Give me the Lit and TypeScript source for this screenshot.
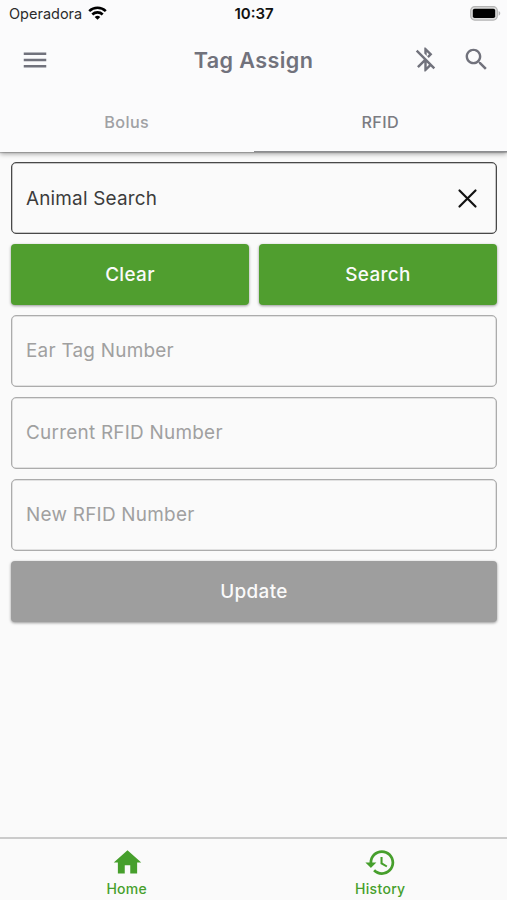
import { LitElement, html, css, svg } from "lit";
import { customElement } from "lit/decorators.js";

const icon = (name: string, d: string) =>
  html`<svg class="icon ${name}" viewBox="0 0 24 24" aria-hidden="true">${svg`<path d=${d}></path>`}</svg>`;

const paths = {
  menu: "M3 18h18v-2H3v2zm0-5h18v-2H3v2zm0-7v2h18V6H3z",
  bluetoothOff:
    "M13 5.83l1.88 1.88-1.6 1.6 1.41 1.41 3.02-3.02L12 2h-1v5.03l2 2v-3.2zM5.41 4L4 5.41 10.59 12 5 17.59 6.41 19 11 14.41V22h1l4.29-4.29 2.3 2.29L20 18.59 5.41 4zM13 18.17v-3.76l1.88 1.88L13 18.17z",
  search:
    "M15.5 14h-.79l-.28-.27C15.41 12.59 16 11.11 16 9.5 16 5.91 13.09 3 9.5 3S3 5.91 3 9.5 5.91 16 9.5 16c1.61 0 3.09-.59 4.23-1.57l.27.28v.79l5 4.99L20.49 19l-4.99-5zm-6 0C7.01 14 5 11.99 5 9.5S7.01 5 9.5 5 14 7.01 14 9.5 11.99 14 9.5 14z",
  home: "M10 20v-6h4v6h5v-8h3L12 3 2 12h3v8z",
  history:
    "M13 3c-4.97 0-9 4.03-9 9H1l3.89 3.89.07.14L9 12H6c0-3.87 3.13-7 7-7s7 3.13 7 7-3.13 7-7 7c-1.93 0-3.68-.79-4.94-2.06l-1.42 1.42C8.27 19.99 10.51 21 13 21c4.97 0 9-4.03 9-9s-4.03-9-9-9zm-1 5v5l4.28 2.54.72-1.21-3.5-2.08V8H12z",
};

@customElement("app-root")
export class AppRoot extends LitElement {
  static styles = css`
    :host {
      display: flex;
      flex-direction: column;
      width: 100%;
      height: 100vh;
      overflow: hidden;
      background: #fafafa;
      font-family: Inter, Roboto, sans-serif;
      color: #333;
    }
    * { box-sizing: border-box; }
    .icon { display: block; fill: currentColor; flex: none; }
    header {
      flex: none;
      height: 152px;
      background: #fbfbfc;
      box-shadow: 0 2px 5px rgba(0, 0, 0, 0.34), 0 1px 1px rgba(0, 0, 0, 0.2);
      color: #71727c;
    }
    .status {
      display: grid;
      grid-template-columns: 1fr auto 1fr;
      align-items: center;
      height: 27px;
      padding: 0 8px 0 9px;
      color: #111;
      font-size: 14.5px;
    }
    .carrier { display: flex; align-items: center; gap: 6px; color: #2b2b2b; }
    .wifi { width: 19px; height: 14px; margin-top: -2px; }
    .time { font-size: 15px; font-weight: 600; color: #111; }
    .battery { justify-self: end; width: 31px; height: 15px; margin-right: -2px; }
    .bar {
      display: grid;
      grid-template-columns: 1fr auto 1fr;
      align-items: center;
      height: 66px;
      padding: 0 16px;
    }
    .menu { width: 30px; height: 32px; margin-left: 4px; }
    h1 { margin: 0; font-size: 21.6px; line-height: 26px; font-weight: 600; letter-spacing: 0.38px; }
    .actions { display: flex; justify-self: end; gap: 22px; }
    .bluetooth, .search { width: 29px; height: 29px; margin-top: -1px; }
    .tabs { display: grid; grid-template-columns: 1fr 1fr; height: 59px; }
    .tab {
      display: flex;
      align-items: center;
      justify-content: center;
      padding-bottom: 1px;
      font-size: 16.2px;
      font-weight: 500;
      letter-spacing: 0.4px;
      color: #a0a1a4;
      border-bottom: 1px solid transparent;
    }
    .tab.active { color: #7b7c82; border-bottom-color: #8c8d90; }
    main {
      flex: 1;
      display: flex;
      flex-direction: column;
      gap: 10px;
      padding: 10px 10px 0 11px;
    }
    .field {
      display: flex;
      align-items: center;
      justify-content: space-between;
      height: 72px;
      padding: 0 17px 2px 14px;
      border: 1px solid #acacac;
      border-radius: 5px;
      box-shadow: inset 0 0 0 0.5px #c8c8c8;
      font-size: 18.9px;
      letter-spacing: 0.26px;
      color: #a0a0a0;
    }
    .field.filled {
      padding-bottom: 0;
      border-color: #484848;
      box-shadow: inset 0 0 0 0.5px #909090;
      color: #3c3c3c;
      letter-spacing: 0.2px;
    }
    .close { width: 23px; height: 23px; color: #111; }
    .row { display: grid; grid-template-columns: 1fr 1fr; gap: 10px; }
    .button {
      display: flex;
      align-items: center;
      justify-content: center;
      width: 100%;
      height: 61px;
      border: 0;
      border-radius: 4px;
      background: #509e2f;
      color: #fafafa;
      font: 500 18.9px Inter, Roboto, sans-serif;
      letter-spacing: 0.35px;
      box-shadow: 0 1px 3px rgba(0, 0, 0, 0.4);
    }
    .button.disabled { background: #9e9e9e; }
    nav {
      flex: none;
      display: grid;
      grid-template-columns: 1fr 1fr;
      height: 63px;
      border-top: 2px solid #cbcbcb;
      color: #469f2c;
    }
    .item {
      display: flex;
      flex-direction: column;
      align-items: center;
      padding-top: 7px;
      font-size: 14px;
      line-height: 19px;
      font-weight: 500;
      letter-spacing: 0.3px;
    }
    .home, .history { width: 33px; height: 33px; }
    .home { margin-left: 1px; }
  `;

  private field(label: string) {
    return html`<div class="field"><span>${label}</span></div>`;
  }

  render() {
    return html`
      <header>
        <div class="status">
          <div class="carrier">
            <span>Operadora</span>
            <svg class="icon wifi" viewBox="0 0 19 14">
              <g fill="none" stroke="#000" stroke-width="2.6">
                <path d="M1.2 5.1a12 12 0 0 1 16.6 0"></path>
                <path d="M4.3 8.5a7.5 7.5 0 0 1 10.4 0"></path>
              </g>
              <path fill="#000" d="M9.5 13.8 6.7 11a4 4 0 0 1 5.6 0z"></path>
            </svg>
          </div>
          <span class="time">10:37</span>
          <svg class="icon battery" viewBox="0 0 31 15">
            <rect x=".7" y=".7" width="26.6" height="13.4" rx="4" fill="#dcdcdc" stroke="#b4b4b4" stroke-width="1.2"></rect>
            <rect x="2.8" y="2.8" width="22.4" height="9.2" rx="1.8" fill="#000"></rect>
            <path d="M28.6 5.1c2.2.8 2.2 3.8 0 4.6z" fill="#b4b4b4"></path>
          </svg>
        </div>
        <div class="bar">
          ${icon("menu", paths.menu)}
          <h1>Tag Assign</h1>
          <div class="actions">
            ${icon("bluetooth", paths.bluetoothOff)} ${icon("search", paths.search)}
          </div>
        </div>
        <div class="tabs">
          <div class="tab"><span>Bolus</span></div>
          <div class="tab active"><span>RFID</span></div>
        </div>
      </header>
      <main>
        <div class="field filled">
          <span>Animal Search</span>
          <svg class="icon close" viewBox="0 0 23 23">
            <path d="M3.5 3.5l16 16M19.5 3.5l-16 16" stroke="currentColor" stroke-width="2.2" stroke-linecap="round"></path>
          </svg>
        </div>
        <div class="row">
          <button class="button">Clear</button>
          <button class="button">Search</button>
        </div>
        ${this.field("Ear Tag Number")}
        ${this.field("Current RFID Number")}
        ${this.field("New RFID Number")}
        <button class="button disabled">Update</button>
      </main>
      <nav>
        <div class="item">${icon("home", paths.home)}<span>Home</span></div>
        <div class="item">${icon("history", paths.history)}<span>History</span></div>
      </nav>
    `;
  }
}
